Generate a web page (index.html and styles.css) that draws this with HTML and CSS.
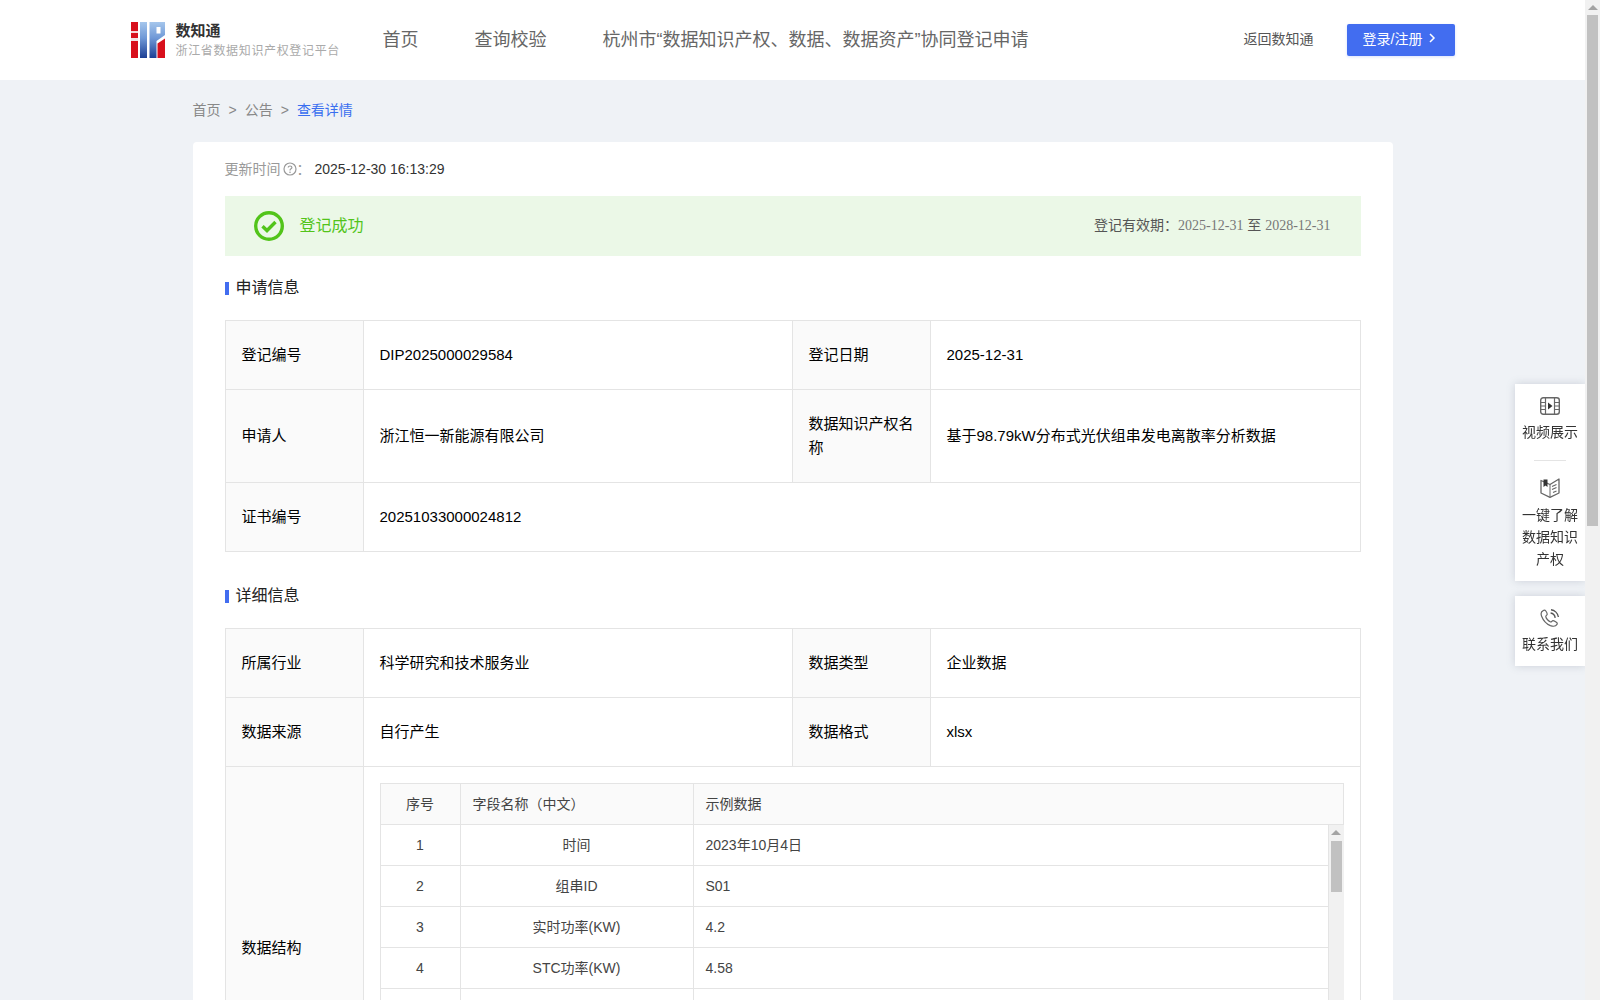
FILE: index.html
```html
<!DOCTYPE html>
<html>
  <head>
    <meta charset="UTF-8" />
    <title>数知通 - 查看详情</title>
    <link rel="stylesheet" href="styles.css">
  </head>

  <body>
    <div class="app">
      <div class="main">
        <header class="header">
          <div class="header-inner">
            <a class="logo">
              <svg class="logo-mark" width="34" height="36" viewBox="0 0 34 36">
                <defs>
                  <linearGradient id="logoBlue" x1="0" y1="0" x2="0" y2="1">
                    <stop offset="0" stop-color="#a5c6ec" />
                    <stop offset="0.45" stop-color="#6f98d6" />
                    <stop offset="1" stop-color="#1c3f94" />
                  </linearGradient>
                </defs>
                <rect x="0" y="0" width="7" height="9" fill="#d8101c" />
                <rect x="0" y="9" width="7" height="2" fill="#f6d5d7" />
                <rect x="0" y="11" width="7" height="5" fill="#d8101c" />
                <rect x="0" y="16" width="7" height="3" fill="#f1e4e6" />
                <rect x="0" y="19" width="7" height="17" fill="#d8101c" />
                <rect x="9" y="0" width="7" height="36" fill="url(#logoBlue)" />
                <path d="M18.5 0H34V13L25.5 19V36H18.5Z" fill="url(#logoBlue)" />
                <rect x="25.5" y="5" width="4" height="6.5" fill="#fff" />
                <path d="M26.5 21.5L34 16.5V36H26.5Z" fill="#d8101c" />
              </svg>
              <div class="logo-text">
                <div class="logo-title">数知通</div>
                <div class="logo-sub">浙江省数据知识产权登记平台</div>
              </div>
            </a>
            <nav class="nav">
              <a>首页</a>
              <a>查询校验</a>
              <a>杭州市“数据知识产权、数据、数据资产”协同登记申请</a>
            </nav>
            <div class="header-right">
              <a class="back-link">返回数知通</a>
              <a class="login-btn">登录/注册
                <svg width="8" height="12" viewBox="0 0 8 12"><path d="M2 2L6 6L2 10" fill="none" stroke="#fff" stroke-width="1.5" /></svg>
              </a>
            </div>
          </div>
        </header>

        <div class="breadcrumb">
          <a>首页</a><span class="sep">&gt;</span><a>公告</a><span class="sep">&gt;</span><a class="current">查看详情</a>
        </div>

        <div class="card">
          <div class="update-line">
            <span class="update-label">更新时间</span>
            <svg class="help-icon" width="14" height="14" viewBox="0 0 14 14">
              <circle cx="7" cy="7" r="6" fill="none" stroke="#999" stroke-width="1.2" />
              <path d="M5.2 5.6C5.2 3.4 8.9 3.5 8.9 5.5C8.9 6.9 7 6.8 7 8.4" fill="none" stroke="#999" stroke-width="1.2" />
              <circle cx="7" cy="10.2" r="0.8" fill="#999" />
            </svg>
            <span class="update-label colon">：</span>
            <span class="update-time">2025-12-30 16:13:29</span>
          </div>

          <div class="status-banner">
            <div class="status-left">
              <svg width="30" height="30" viewBox="0 0 30 30">
                <circle cx="15" cy="15" r="13.3" fill="none" stroke="#52c41a" stroke-width="3.4" />
                <path d="M8.5 15.2L13 19.5L21.5 11" fill="none" stroke="#52c41a" stroke-width="3.4" />
              </svg>
              <span class="status-text">登记成功</span>
            </div>
            <div class="status-right">登记有效期：<span class="date">2025-12-31</span> 至 <span class="date">2028-12-31</span></div>
          </div>

          <h3 class="section-title">申请信息</h3>
          <table class="info-table">
            <colgroup>
              <col class="col-label"><col class="col-value"><col class="col-label"><col>
            </colgroup>
            <tr>
              <th>登记编号</th>
              <td>DIP2025000029584</td>
              <th>登记日期</th>
              <td>2025-12-31</td>
            </tr>
            <tr>
              <th>申请人</th>
              <td>浙江恒一新能源有限公司</td>
              <th>数据知识产权名称</th>
              <td>基于98.79kW分布式光伏组串发电离散率分析数据</td>
            </tr>
            <tr>
              <th>证书编号</th>
              <td colspan="3">20251033000024812</td>
            </tr>
          </table>

          <h3 class="section-title second">详细信息</h3>
          <table class="info-table">
            <colgroup>
              <col class="col-label"><col class="col-value"><col class="col-label"><col>
            </colgroup>
            <tr>
              <th>所属行业</th>
              <td>科学研究和技术服务业</td>
              <th>数据类型</th>
              <td>企业数据</td>
            </tr>
            <tr>
              <th>数据来源</th>
              <td>自行产生</td>
              <th>数据格式</th>
              <td>xlsx</td>
            </tr>
            <tr>
              <th>数据结构</th>
              <td colspan="3" class="structure-cell">
                <table class="field-table field-head">
                  <colgroup><col class="col-no"><col class="col-name"><col></colgroup>
                  <tr>
                    <th class="center">序号</th>
                    <th>字段名称（中文）</th>
                    <th>示例数据</th>
                  </tr>
                </table>
                <div class="field-scroll">
                  <table class="field-table field-body">
                    <colgroup><col class="col-no"><col class="col-name"><col></colgroup>
                    <tr><td class="center">1</td><td class="center">时间</td><td>2023年10月4日</td></tr>
                    <tr><td class="center">2</td><td class="center">组串ID</td><td>S01</td></tr>
                    <tr><td class="center">3</td><td class="center">实时功率(KW)</td><td>4.2</td></tr>
                    <tr><td class="center">4</td><td class="center">STC功率(KW)</td><td>4.58</td></tr>
                    <tr><td></td><td></td><td></td></tr>
                  </table>
                  <div class="scrollbar inner-bar">
                    <div class="bar-arrow"></div>
                    <div class="bar-thumb"></div>
                  </div>
                </div>
              </td>
            </tr>
          </table>
        </div>
      </div>

      <div class="scrollbar page-bar">
        <div class="bar-arrow"></div>
        <div class="bar-thumb"></div>
      </div>
    </div>

    <div class="side-float">
      <div class="side-box">
        <div class="side-item">
          <svg width="20" height="18" viewBox="0 0 20 18">
            <rect x="0.7" y="0.7" width="18.6" height="16.6" rx="2.5" fill="none" stroke="#666" stroke-width="1.4" />
            <path d="M5.5 1V17M14.5 1V17M1 5.5H5.5M1 9H5.5M1 12.5H5.5M14.5 5.5H19M14.5 9H19M14.5 12.5H19" fill="none" stroke="#666" stroke-width="1.2" />
            <path d="M8 5.5L12.5 9L8 12.5Z" fill="#333" />
          </svg>
          <span>视频展示</span>
        </div>
        <div class="side-divider"></div>
        <div class="side-item">
          <svg width="20" height="20" viewBox="0 0 20 20">
            <path d="M1 2.5L10 6.5L19 1V15L10 19.3L1 15Z" fill="none" stroke="#666" stroke-width="1.3" stroke-linejoin="round" />
            <path d="M10 6.5V19" fill="none" stroke="#666" stroke-width="1" />
            <path d="M3.5 1.5H7.5V9L5.5 7.5L3.5 9Z" fill="#333" />
            <path d="M12 8.5L16.5 6.5M12 11.5L16.5 9.5M13 14.5L16.5 13" fill="none" stroke="#666" stroke-width="1.2" />
          </svg>
          <span>一键了解<br>数据知识<br>产权</span>
        </div>
      </div>
      <div class="side-box contact">
        <div class="side-item">
          <svg width="20" height="18" viewBox="0 0 20 18">
            <path d="M3.2 1.6C1.2 2.6 0.6 4.6 1.6 7.2C3 10.8 6.6 15 10.4 16.6C13.2 17.6 15.8 17.4 17 15.4C17.6 14.4 17 13.6 16 13C15 12.4 13.8 11.6 13 11.6C12 11.6 11.6 13.2 10.6 13C8.6 12.4 6 9.4 5.8 7.6C5.6 6.6 7.4 6.2 7.2 5C7 4 6.4 2.8 5.8 2C5.2 1.2 4.2 1 3.2 1.6Z" fill="none" stroke="#666" stroke-width="1.2" />
            <path d="M11 0.8C14.8 1.2 17.8 4.2 18.4 8M10.6 4C12.8 4.3 14.8 6.2 15.2 8.8" fill="none" stroke="#555" stroke-width="1.4" />
          </svg>
          <span>联系我们</span>
        </div>
      </div>
    </div>
  </body>
</html>
```

FILE: styles.css
```css
html, body {
  height: 100%;
  margin: 0;
}

body {
  font-family: "Liberation Sans", "Noto Sans CJK SC", sans-serif;
  font-size: 14px;
  color: #333;
  overflow: hidden;
}

.app {
  display: flex;
  height: 100vh;
}

.main {
  flex: 1;
  min-width: 0;
  overflow: hidden;
  background-color: #eff2f6;
}

/* header */
.header {
  height: 80px;
  background-color: #fff;
}

.header-inner {
  width: 1324px;
  height: 100%;
  margin: 0 auto;
  display: flex;
  align-items: center;
}

.logo {
  display: flex;
  align-items: center;
  width: 252px;
}

.logo-mark {
  flex: none;
}

.logo-text {
  margin-left: 11px;
}

.logo-title {
  font-size: 15px;
  font-weight: bold;
  line-height: 20px;
  color: #333;
}

.logo-sub {
  margin-top: 1px;
  font-size: 12px;
  line-height: 18px;
  letter-spacing: 0.65px;
  color: #aaa;
  white-space: nowrap;
}

.nav {
  display: flex;
  gap: 56px;
  padding-bottom: 4px;
  font-size: 18px;
  color: #666;
  white-space: nowrap;
}

.header-right {
  margin-left: auto;
  display: flex;
  align-items: center;
}

.back-link {
  padding-bottom: 4px;
  color: #555;
}

.login-btn {
  display: flex;
  align-items: center;
  gap: 6px;
  margin-left: 33px;
  width: 108px;
  height: 32px;
  padding: 0 0 4px 16px;
  box-sizing: border-box;
  color: #fff;
  background-color: #426df0;
  border-radius: 2px;
  box-shadow: 0 1px 3px rgba(66, 109, 240, 0.2);
}

/* breadcrumb */
.breadcrumb {
  width: 1200px;
  margin: 0 auto;
  padding: 20px 0 22px;
  line-height: 20px;
  color: #888;
}

.breadcrumb .sep {
  margin: 0 8px;
}

.breadcrumb .current {
  color: #3a6ff0;
}

/* card */
.card {
  width: 1136px;
  margin: 0 auto;
  padding: 17px 32px 32px;
  background-color: #fff;
  border-radius: 4px;
}

.update-line {
  display: flex;
  align-items: center;
  height: 20px;
}

.update-label {
  margin-bottom: 2px;
  color: #999;
}

.help-icon {
  margin-left: 2px;
}

.colon {
  width: 18px;
}

.update-time {
  color: #333;
}

.status-banner {
  display: flex;
  justify-content: space-between;
  align-items: center;
  height: 60px;
  margin-top: 17px;
  padding: 0 30px 0 29px;
  background-color: #ebf8e7;
}

.status-left {
  display: flex;
  align-items: center;
  gap: 16px;
}

.status-text {
  margin-bottom: 4px;
  font-size: 16px;
  color: #52c41a;
}

.status-right {
  padding-bottom: 4px;
  color: #555;
}

.status-right .date {
  font-family: "Liberation Serif", serif;
  font-size: 14px;
  color: #777;
}

.section-title {
  position: relative;
  margin: 21px 0;
  padding-left: 11px;
  font-size: 16px;
  font-weight: normal;
  line-height: 22px;
  color: #222;
}

.section-title::before {
  content: "";
  position: absolute;
  left: 0;
  top: 5px;
  width: 4px;
  height: 13px;
  background-color: #426df0;
}

.section-title.second {
  margin-top: 33px;
}

/* info tables */
.info-table {
  width: 100%;
  table-layout: fixed;
  border-collapse: collapse;
}

.col-label {
  width: 138px;
}

.col-value {
  width: 429px;
}

.info-table > tbody > tr > th,
.info-table > tbody > tr > td {
  padding: 22px 16px;
  border: 1px solid #e4e4e4;
  font-size: 15px;
  line-height: 24px;
  font-weight: normal;
  text-align: left;
  color: #000;
}

.info-table > tbody > tr > th {
  background-color: #fafafa;
}

.info-table > tbody > tr > td.structure-cell {
  padding: 16px;
}

/* field table inside the structure cell */
.field-table {
  width: 100%;
  table-layout: fixed;
  border-collapse: collapse;
}

.col-no {
  width: 80px;
}

.col-name {
  width: 233px;
}

.field-table th,
.field-table td {
  height: 39px;
  padding: 0 12px 1px;
  border: 1px solid #e4e4e4;
  font-size: 14px;
  line-height: 20px;
  font-weight: normal;
  text-align: left;
  color: #444;
}

.field-table th {
  background-color: #fafafa;
}

.field-table .center {
  text-align: center;
}

.field-scroll {
  display: flex;
  height: 288px;
  overflow: hidden;
}

.field-body {
  flex: 1;
  align-self: flex-start;
}

.field-body tr:first-child td {
  border-top: 0;
}

/* scrollbars */
.scrollbar {
  flex: none;
  display: flex;
  flex-direction: column;
  align-items: center;
  background-color: #f1f1f1;
}

.bar-arrow {
  width: 0;
  height: 0;
  margin-top: 5px;
  border-left: 5px solid transparent;
  border-right: 5px solid transparent;
  border-bottom: 5px solid #a3a3a3;
}

.bar-thumb {
  width: 11px;
  background-color: #c1c1c1;
}

.page-bar {
  width: 15px;
}

.page-bar .bar-thumb {
  height: 511px;
  margin-top: 5px;
}

.inner-bar {
  width: 15px;
  height: 288px;
}

.inner-bar .bar-thumb {
  height: 51px;
  margin-top: 6px;
}

/* floating side buttons */
.side-float {
  position: fixed;
  top: 384px;
  right: 15px;
  width: 70px;
  display: flex;
  flex-direction: column;
  gap: 15px;
}

.side-box {
  padding: 13px 0 11px;
  background-color: #fff;
  box-shadow: 0 0 8px rgba(120, 130, 150, 0.3);
  clip-path: inset(-10px 0 -10px -10px);
}

.side-item {
  display: flex;
  flex-direction: column;
  align-items: center;
  gap: 6px;
  line-height: 22px;
  text-align: center;
  color: #333;
}

.side-divider {
  width: 32px;
  height: 1px;
  margin: 17px auto;
  background-color: #e4e4e4;
}
```
